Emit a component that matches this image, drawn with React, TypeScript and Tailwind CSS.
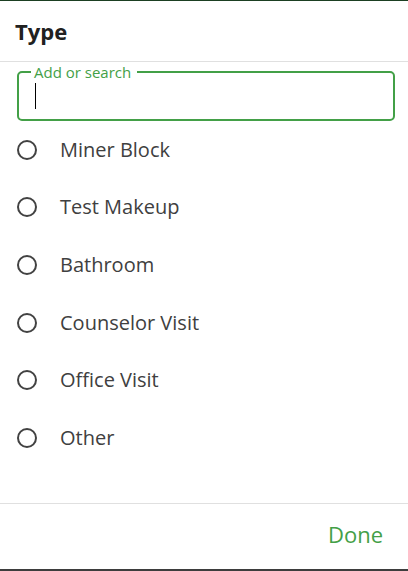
const options = [
  'Miner Block',
  'Test Makeup',
  'Bathroom',
  'Counselor Visit',
  'Office Visit',
  'Other',
];

function RadioRow({ label }: { label: string }) {
  return (
    <div className="flex h-[57.6px] items-center pl-[17px]">
      <span className="h-5 w-5 rounded-full border-2 border-[#424242]" />
      <span className="ml-[23px] text-[20px] leading-[28px] text-[#404040]">{label}</span>
    </div>
  );
}

export default function App() {
  return (
    <div className="flex h-[571px] w-full flex-col bg-white font-['Open_Sans',sans-serif]">
      <div className="h-px bg-[#1b3f22]" />

      {/* Header */}
      <div className="px-[15px] py-[15px]">
        <h1 className="text-[22px] font-bold leading-[30px] text-[#212121]">Type</h1>
      </div>
      <div className="h-px bg-[#e0e0e0]" />

      {/* Search field */}
      <div className="pl-[17px] pr-[13px] pt-[2px]">
        <fieldset className="rounded-[5px] border-2 border-[#43a047] pb-[10px] pl-[12px]">
          <legend className="pl-[3px] pr-[6px] text-[15px] leading-[16px] text-[#43a047]">Add or search</legend>
          <div className="ml-[4px] mt-[3px] h-[26px] w-px bg-black" />
        </fieldset>
      </div>

      {/* Options */}
      <div className="flex flex-col">
        {options.map((o) => (
          <RadioRow key={o} label={o} />
        ))}
      </div>

      <div className="flex-1" />

      {/* Footer */}
      <div className="h-px bg-[#e0e0e0]" />
      <div className="flex h-[65px] items-center justify-end pb-[6px] pr-[25px]">
        <button className="text-[22px] leading-[30px] text-[#43a047]">Done</button>
      </div>
      <div className="h-[2px] bg-[#3d3d3d]" />
    </div>
  );
}
